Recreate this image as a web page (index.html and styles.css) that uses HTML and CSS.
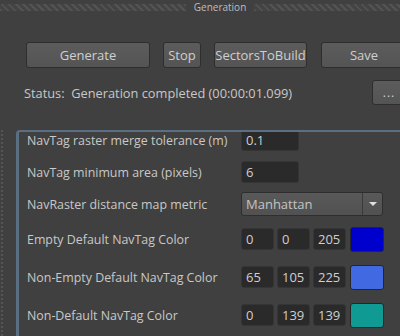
FILE: index.html
```html
<!DOCTYPE html>
<html lang="en">
<head>
  <meta charset="UTF-8" />
  <meta name="viewport" content="width=device-width, initial-scale=1.0"/>
  <title>Generation</title>
  <link rel="stylesheet" href="styles.css">
</head>
<body>
  <div class="section">
    <div class="section-head">
      <span class="hatch"></span>
      <span class="section-title">Generation</span>
      <span class="hatch"></span>
    </div>

    <div class="actions">
      <button class="btn btn-generate">Generate</button>
      <button class="btn btn-stop">Stop</button>
      <button class="btn btn-sectors">SectorsToBuild</button>
      <button class="btn btn-save">Save</button>
    </div>

    <div class="status-row">
      <span class="status">Status:&nbsp; Generation completed (00:00:01.099)</span>
      <button class="btn btn-more">...</button>
    </div>

    <div class="panel-wrap">
      <div class="panel">
        <div class="panel-body">
          <div class="row">
            <span class="label">NavTag raster merge tolerance (m)</span>
            <input class="field field-num" type="text" value="0.1">
          </div>
          <div class="row">
            <span class="label">NavTag minimum area (pixels)</span>
            <input class="field field-num" type="text" value="6">
          </div>
          <div class="row">
            <span class="label">NavRaster distance map metric</span>
            <div class="combo">
              <span class="combo-value">Manhattan</span>
              <span class="combo-arrow"></span>
            </div>
          </div>
          <div class="row row-color">
            <span class="label">Empty Default NavTag Color</span>
            <div class="rgb">
              <input class="field field-rgb" type="text" value="0">
              <input class="field field-rgb" type="text" value="0">
              <input class="field field-rgb" type="text" value="205">
              <span class="swatch swatch-blue"></span>
            </div>
          </div>
          <div class="row row-color">
            <span class="label">Non-Empty Default NavTag Color</span>
            <div class="rgb">
              <input class="field field-rgb" type="text" value="65">
              <input class="field field-rgb" type="text" value="105">
              <input class="field field-rgb" type="text" value="225">
              <span class="swatch swatch-royal"></span>
            </div>
          </div>
          <div class="row row-color">
            <span class="label">Non-Default NavTag Color</span>
            <div class="rgb">
              <input class="field field-rgb" type="text" value="0">
              <input class="field field-rgb" type="text" value="139">
              <input class="field field-rgb" type="text" value="139">
              <span class="swatch swatch-teal"></span>
            </div>
          </div>
        </div>
      </div>
    </div>
  </div>
</body>
</html>
```
FILE: styles.css
```css
body {
  margin: 0;
  background: #404040;
  font-family: "Open Sans", "Liberation Sans", sans-serif;
  font-size: 12px;
  color: #c8c8c8;
  overflow: hidden;
  height: 336px;
}
.section {
  width: 440px;
}
.section-head {
  display: flex;
  align-items: center;
  height: 12px;
  padding-top: 1px;
}
.hatch {
  flex: 1;
  height: 7px;
  background: repeating-linear-gradient(45deg, #535353 0 2px, #444 2px 5px);
}
.section-title {
  font-size: 10px;
  color: #bdbdbd;
  padding: 0 8px;
  line-height: 12px;
}
.actions {
  display: flex;
  gap: 13px;
  margin: 29px 0 0 26px;
}
.btn {
  height: 26px;
  background: linear-gradient(#5c5c5c, #545454);
  border: 1px solid #2e2e2e;
  border-radius: 3px;
  color: #cfcfcf;
  font-family: inherit;
  font-size: 13px;
  padding: 0;
}
.btn-generate { width: 124px; }
.btn-stop { width: 38px; }
.btn-sectors { width: 93px; }
.btn-save { width: 86px; margin-left: 1px; }
.status-row {
  display: flex;
  align-items: center;
  justify-content: space-between;
  margin: 12px 0 0 24px;
  width: 382px;
}
.status {
  font-size: 12.8px;
}
.btn-more {
  width: 34px;
  height: 25px;
  font-size: 12px;
  letter-spacing: 1px;
}
.panel-wrap {
  margin-top: 25px;
  padding-left: 13px;
  border-left: 2px dotted #555;
  margin-left: 1px;
}
.panel {
  border-top: 2px solid #5a6f82;
  border-left: 3px solid #5a6f82;
  border-top-left-radius: 4px;
  height: 220px;
  overflow: hidden;
}
.panel-body {
  margin-top: -8px;
  padding-left: 8px;
}
.row {
  display: flex;
  align-items: center;
  height: 32px;
}
.row-color {
  height: 38px;
}
.label {
  width: 214px;
  font-size: 12.4px;
}
.field {
  box-sizing: border-box;
  height: 22px;
  background: #2a2a2a;
  border: 1px solid #353535;
  border-radius: 3px;
  color: #cfcfcf;
  font-family: inherit;
  font-size: 13px;
  padding: 0 4px;
  outline: none;
}
.field-num {
  width: 58px;
}
.combo {
  box-sizing: border-box;
  display: flex;
  align-items: stretch;
  width: 142px;
  height: 24px;
  background: linear-gradient(#595959, #515151);
  border: 1px solid #2e2e2e;
  border-radius: 3px;
}
.combo-value {
  flex: 1;
  padding-left: 4px;
  line-height: 22px;
  font-size: 13px;
  color: #c4c4c4;
}
.combo-arrow {
  width: 19px;
  border-left: 1px solid #3a3a3a;
  position: relative;
}
.combo-arrow::after {
  content: "";
  position: absolute;
  left: 6px;
  top: 9px;
  border-left: 4px solid transparent;
  border-right: 4px solid transparent;
  border-top: 4px solid #e0e0e0;
}
.rgb {
  display: flex;
  align-items: center;
  gap: 3px;
}
.field-rgb {
  width: 33px;
}
.swatch {
  box-sizing: border-box;
  width: 34px;
  height: 25px;
  border: 1px solid #262626;
  border-radius: 3px;
  margin-left: 1px;
}
.swatch-blue { background: #0000cd; }
.swatch-royal { background: #4169e1; }
.swatch-teal { background: #0f9a94; }
```
